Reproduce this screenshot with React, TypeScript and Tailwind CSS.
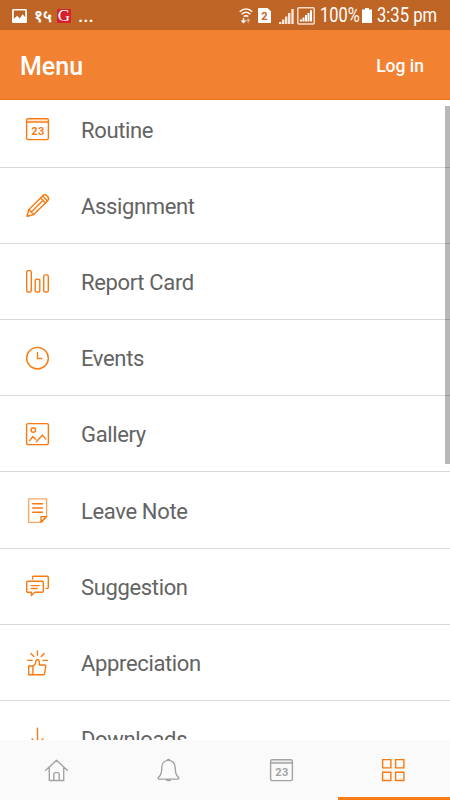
import type { ReactNode } from "react";

const ORANGE = "#fb7a10";
const GRAY = "#a3a3a3";

function Icon({ color = ORANGE, children }: { color?: string; children: ReactNode }) {
  return (
    <svg
      className="block size-[25px] shrink-0 overflow-visible"
      viewBox="0 0 25 25"
      fill="none"
      stroke={color}
      strokeWidth="1.4"
      strokeLinecap="round"
      strokeLinejoin="round"
    >
      {children}
    </svg>
  );
}

function CalendarIcon({ color = ORANGE }: { color?: string }) {
  return (
    <Icon color={color}>
      <rect x="1.6" y="1.6" width="21.8" height="21" rx="1.5" />
      <path d="M2 2.8h21" strokeOpacity=".35" />
      <path d="M2 5h21" />
      <text
        x="12.8"
        y="17.6"
        textAnchor="middle"
        fill={color}
        stroke="none"
        className="font-['Roboto'] text-[11px] font-bold"
        textLength="13"
      >
        23
      </text>
    </Icon>
  );
}

const items = [
  { label: "Routine", icon: <CalendarIcon /> },
  {
    label: "Assignment",
    icon: (
      <Icon>
        <path d="M2 23.2 3.8 16.8 17.7 2.8a3 3 0 0 1 4.2 0l.7.7a3 3 0 0 1 0 4.2L8.7 21.6z" />
        <path d="M3.8 16.8 8.7 21.6M15.6 5l4.9 4.9M17.5 3.1l4.9 4.9M6.3 19.1 17.9 7.4M2.4 21.8l1.3 1.2" />
      </Icon>
    ),
  },
  {
    label: "Report Card",
    icon: (
      <Icon>
        <rect x="1.7" y="1.6" width="4.6" height="21.4" rx="1.6" />
        <rect x="10.2" y="10.2" width="4.6" height="12.8" rx="1.6" />
        <rect x="18.7" y="5.9" width="4.6" height="17.1" rx="1.6" />
      </Icon>
    ),
  },
  {
    label: "Events",
    icon: (
      <Icon>
        <circle cx="12.5" cy="12.2" r="10.8" />
        <path d="M12.5 6.5v6h4.2" />
      </Icon>
    ),
  },
  {
    label: "Gallery",
    icon: (
      <Icon>
        <rect x="1.6" y="1.6" width="21.8" height="21" rx="1.5" />
        <circle cx="8.3" cy="8" r="2.2" />
        <path d="m4.7 18.7 3.2-4.2 2.8 2.8M11.5 19.4l6-6.3 3.1 3.8" />
      </Icon>
    ),
  },
  {
    label: "Leave Note",
    icon: (
      <Icon>
        <path d="M3.6.9h18v17.7l-5.6 5.8H3.6z" strokeOpacity=".65" />
        <path d="M21.4 18.6H16v5.6zM7.7 5.8h9.8M7.7 10h9.8M7.7 14.200h9.8" />
      </Icon>
    ),
  },
  {
    label: "Suggestion",
    icon: (
      <Icon>
        <path d="M7.6 5.100V3.200a1 1 0 0 1 1-1h13.7a1 1 0 0 1 1 1v10.2a1 1 0 0 1-1 1h-1.4" />
        <path d="M2.7 7.3h14.6a1 1 0 0 1 1 1v9a1 1 0 0 1-1 1H9.7l-3.3 3.2v-3.2H2.7a1 1 0 0 1-1-1v-9a1 1 0 0 1 1-1zM6.2 11.600h8M6.2 14.500h6" />
      </Icon>
    ),
  },
  {
    label: "Appreciation",
    icon: (
      <Icon>
        <path d="M3.7 16h4.2v8.7H3.7z" />
        <path d="M7.9 16.2c2.1-1 3-2.6 2.9-4.6 0-3 3.4-2.6 3.5.2V15h5.6c.7 0 1 .5.9 1.1l-1.2 7.6c-.1.6-.5 1-1.1 1H7.9" />
        <path d="M12.5.9v4.3M5.9 3.6l2.9 3M19.1 3.6l-2.9 3M2.7 10.4h4.4M17.9 10.4h4.4" />
      </Icon>
    ),
  },
  {
    label: "Downloads",
    icon: (
      <Icon>
        <path d="M12.5 1.2v16M7 12l5.5 5.3L18 12M2 18.5v5.8h21v-5.8" />
      </Icon>
    ),
  },
];

const tabs = [
  {
    name: "home",
    icon: (
      <Icon color={GRAY}>
        <path d="m1.7 12.3 10.8-10 10.8 10M5.3 9.2v13.3h14.4V9.2M9.8 22.3v-6a1.7 1.7 0 0 1 1.7-1.7h2a1.7 1.7 0 0 1 1.7 1.7v6" />
      </Icon>
    ),
  },
  {
    name: "alerts",
    icon: (
      <Icon color={GRAY}>
        <path d="M11.2 2.3a1.4 1.2 0 0 1 2.6 0M12.5 2.4c-4.2 0-6.7 3-6.7 7.2 0 5.2-.6 7.7-3 9.5-1 .8-.9 2 .4 2h18.6c1.3 0 1.4-1.2.4-2-2.4-1.8-3-4.3-3-9.5 0-4.2-2.5-7.2-6.7-7.2zM10.2 21.4c.6 1.5 4 1.5 4.6 0" />
      </Icon>
    ),
  },
  { name: "routine", icon: <CalendarIcon color={GRAY} /> },
  {
    name: "menu",
    active: true,
    icon: (
      <Icon>
        <path
          strokeLinejoin="miter"
          d="M1.6 1.6h8.3v8.3H1.6zM14.6 1.6h8.3v8.3h-8.3zM1.6 14.2h8.3v8.3H1.6zM14.6 14.2h8.3v8.3h-8.3z"
        />
      </Icon>
    ),
  },
];

function Signal({ boxed }: { boxed?: boolean }) {
  return boxed ? (
    <svg className="ml-[3px] h-[18px] w-[18px]" viewBox="0 0 18 18" fill="none">
      <rect x=".8" y=".8" width="16.4" height="16.2" rx="1" stroke="#f7dccb" strokeWidth="1.5" />
      <path d="M4 14.5v-2M6.5 14.5v-4M9 14.5V8M11.5 14.5V6M14 14.5V3.2" stroke="#fff" strokeWidth="2" />
    </svg>
  ) : (
    <svg className="ml-2 h-[18px] w-[15px]" viewBox="0 0 15 18" fill="none">
      <path d="M1.2 17v-2M4.2 17v-4.5M7.2 17V9.5M10.2 17V6M13.5 17V2" stroke="#f9e6da" strokeWidth="2.4" />
    </svg>
  );
}

function StatusBar() {
  return (
    <div className="flex h-[30px] shrink-0 items-center bg-[#be6526] pt-px pl-3 text-white">
      <svg className="h-[14px] w-[15px]" viewBox="0 0 15 14">
        <rect width="15" height="14" rx="1.5" fill="#fff" />
        <path d="M1.8 1.5h11.4v6.8l-2.5-3-3 4.2-2.4-2.7-3.5 3z" fill="#be6526" />
      </svg>
      <span className="ml-[7px] w-4 whitespace-nowrap text-[17px] leading-4 font-bold">१५</span>
      <span className="ml-[7px] flex size-[14px] items-center justify-center rounded-[1px] bg-[#d91f2c] font-['Liberation_Serif'] text-[17px] leading-none">
        G
      </span>
      <span className="ml-[7px] text-[19px] leading-6 font-medium">...</span>

      <svg className="ml-auto h-4 w-[14px]" viewBox="0 0 14 16" fill="none" stroke="#fff" strokeWidth="1.5">
        <path d="M.7 3.8c3.8-3.6 8.8-3.6 12.6 0M2.7 6.2c2.6-2.4 6-2.4 8.6 0M4.8 8.6c1.4-1.2 3-1.2 4.4 0" />
        <path d="M4.5 10v4M2.5 12.6l2 2 2-2" strokeWidth="1.4" />
        <path d="M9.2 15v-3.5M7.5 12.8l1.7-1.7 1.7 1.7" strokeWidth="1.2" opacity=".5" />
      </svg>
      <svg className="ml-[5px] h-[15px] w-[13px]" viewBox="0 0 13 15">
        <path d="M1 0h8.5L13 3.3V14a1 1 0 0 1-1 1H1a1 1 0 0 1-1-1V1a1 1 0 0 1 1-1z" fill="#fff" />
        <text x="6.5" y="11.6" textAnchor="middle" fill="#be6526" className="text-[11px] font-bold">
          2
        </text>
      </svg>
      <Signal />
      <Signal boxed />
      <span className="ml-[5px] w-[40px] whitespace-nowrap">
        <span className="inline-block origin-left scale-x-[.82] text-[20px] leading-6">100%</span>
      </span>
      <svg className="ml-[2px] h-[15px] w-[10px]" viewBox="0 0 10 15">
        <path d="M3 0h4v1.5h3V15H0V1.5h3z" fill="#fff" />
      </svg>
      <span className="ml-[5px] w-[73px] whitespace-nowrap">
        <span className="inline-block origin-left scale-x-[.83] text-[20px] leading-6">3:35 pm</span>
      </span>
    </div>
  );
}

export default function App() {
  return (
    <div className="relative flex h-[800px] w-[450px] flex-col overflow-hidden bg-white font-['Roboto',sans-serif]">
      <StatusBar />
      <header className="flex h-[70px] shrink-0 items-center justify-between border-b border-[#e97214] bg-[#f28232] pr-[26px] pl-5 text-white">
        <h1 className="pt-[4px] text-[25px] font-medium">Menu</h1>
        <button className="pt-[3px] text-[17.5px] font-medium">Log in</button>
      </header>

      <main className="min-h-0 flex-1 overflow-hidden">
        <ul className="-mt-[8.5px]">
          {items.map((item) => (
            <li
              key={item.label}
              className="flex h-[76.2px] items-center border-b border-[#d9d9d9] pt-px pl-[25px]"
            >
              {item.icon}
              <span className="ml-[31px] pt-px text-[22px] tracking-[-0.35px] text-[#636363]">
                {item.label}
              </span>
            </li>
          ))}
        </ul>
      </main>
      {/* scroll thumb */}
      <div className="absolute top-[106px] right-0 h-[358px] w-[5px] bg-black/28" />

      <nav className="grid h-[60px] shrink-0 grid-cols-4 bg-[#fafafa]">
        {tabs.map((tab) => (
          <button
            key={tab.name}
            aria-label={tab.name}
            className={`flex items-center justify-center border-b-[3px] pt-[3px] ${
              tab.active ? "border-[#f97c14]" : "border-transparent"
            }`}
          >
            {tab.icon}
          </button>
        ))}
      </nav>
    </div>
  );
}
